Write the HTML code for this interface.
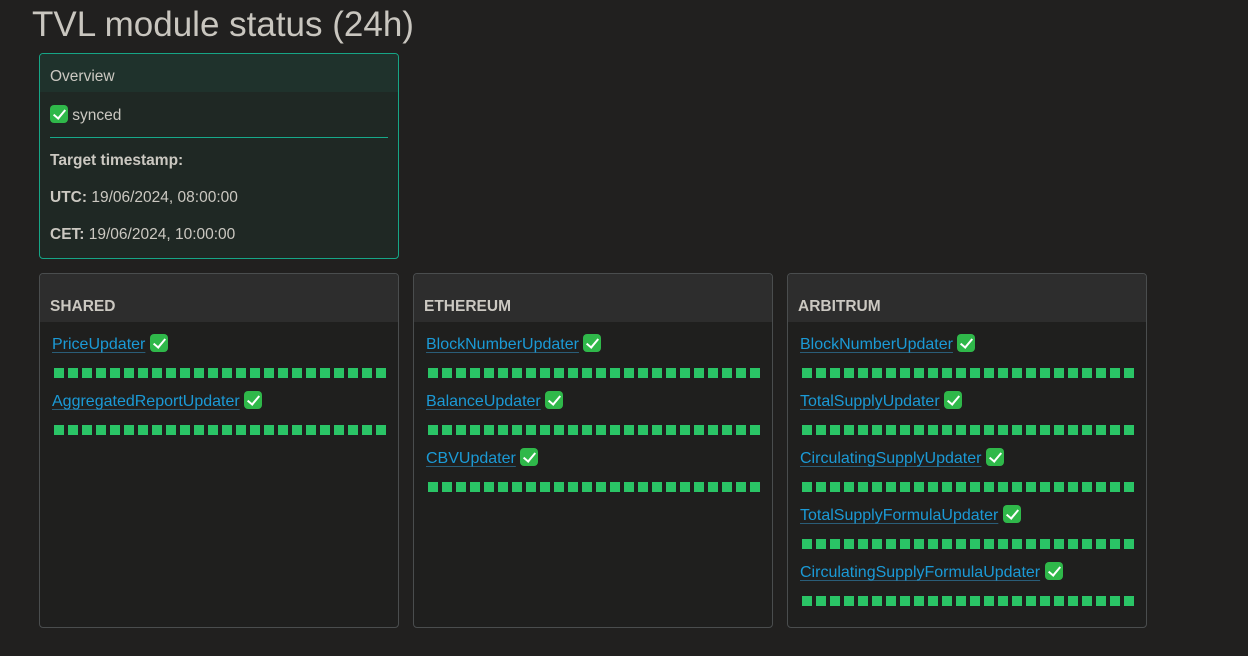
<!DOCTYPE html>
<html><head><style>
*{margin:0;padding:0;box-sizing:border-box}
body{width:1248px;height:656px;background:#21201f;font-family:"Liberation Sans",Arial,sans-serif;color:#cbc8c1;position:relative;overflow:hidden}
h1{position:absolute;left:32px;top:5px;font-size:35px;font-weight:normal;color:#c9c6bf;white-space:nowrap}
.ov{position:absolute;left:39px;top:53px;width:360px;height:206px;border:1px solid #16a586;border-radius:4px;background:#1f2824;overflow:hidden}
.ov .hd{height:38px;background:#1f322c;padding:14px 0 0 10px;font-size:15.5px}
.t{position:absolute;left:10px;font-size:15.5px;white-space:nowrap}
.hr{position:absolute;left:10px;right:10px;top:83px;height:1px;background:#17a98a}
.ck{display:inline-block;width:18px;height:18px;background:#2fb84a;border-radius:4px;vertical-align:-3px;position:relative}
.ck:after{content:"";position:absolute;left:6px;top:2px;width:5px;height:10px;border:solid #fff;border-width:0 2.5px 2.5px 0;transform:rotate(40deg)}
.card{position:absolute;top:273px;width:360px;height:355px;border:1px solid #4a4d4e;border-radius:4px;background:#1f1f1e;overflow:hidden}
.card .hd{height:48px;background:#2d2d2d;padding:24px 0 0 10px;font-size:15.5px;font-weight:bold}
.row{position:absolute;left:12px;font-size:16px;white-space:nowrap}
.row a{color:#1b9ad6;text-decoration:underline;text-decoration-color:#2a5d78;text-underline-offset:3px}
.sq{position:absolute;left:14px;width:334px;height:10px;background:repeating-linear-gradient(90deg,#2ac466 0 10px,transparent 10px 14px)}
</style></head><body>
<h1>TVL module status (24h)</h1>
<div class="ov"><div class="hd">Overview</div>
<div class="t" style="top:51px"><span class="ck"></span> synced</div>
<div class="hr"></div>
<div class="t" style="top:98px;font-weight:bold">Target timestamp:</div>
<div class="t" style="top:135px"><b>UTC:</b> 19/06/2024, 08:00:00</div>
<div class="t" style="top:172px"><b>CET:</b> 19/06/2024, 10:00:00</div>
</div>

<div class="card" style="left:39px"><div class="hd">SHARED</div>
<div class="row" style="top:60px"><a>PriceUpdater</a> <span class="ck"></span></div>
<div class="sq" style="top:94px"></div>
<div class="row" style="top:117px"><a>AggregatedReportUpdater</a> <span class="ck"></span></div>
<div class="sq" style="top:151px"></div>
</div>

<div class="card" style="left:413px"><div class="hd">ETHEREUM</div>
<div class="row" style="top:60px"><a>BlockNumberUpdater</a> <span class="ck"></span></div>
<div class="sq" style="top:94px"></div>
<div class="row" style="top:117px"><a>BalanceUpdater</a> <span class="ck"></span></div>
<div class="sq" style="top:151px"></div>
<div class="row" style="top:174px"><a>CBVUpdater</a> <span class="ck"></span></div>
<div class="sq" style="top:208px"></div>
</div>

<div class="card" style="left:787px"><div class="hd">ARBITRUM</div>
<div class="row" style="top:60px"><a>BlockNumberUpdater</a> <span class="ck"></span></div>
<div class="sq" style="top:94px"></div>
<div class="row" style="top:117px"><a>TotalSupplyUpdater</a> <span class="ck"></span></div>
<div class="sq" style="top:151px"></div>
<div class="row" style="top:174px"><a>CirculatingSupplyUpdater</a> <span class="ck"></span></div>
<div class="sq" style="top:208px"></div>
<div class="row" style="top:231px"><a>TotalSupplyFormulaUpdater</a> <span class="ck"></span></div>
<div class="sq" style="top:265px"></div>
<div class="row" style="top:288px"><a>CirculatingSupplyFormulaUpdater</a> <span class="ck"></span></div>
<div class="sq" style="top:322px"></div>
</div>
</body></html>
